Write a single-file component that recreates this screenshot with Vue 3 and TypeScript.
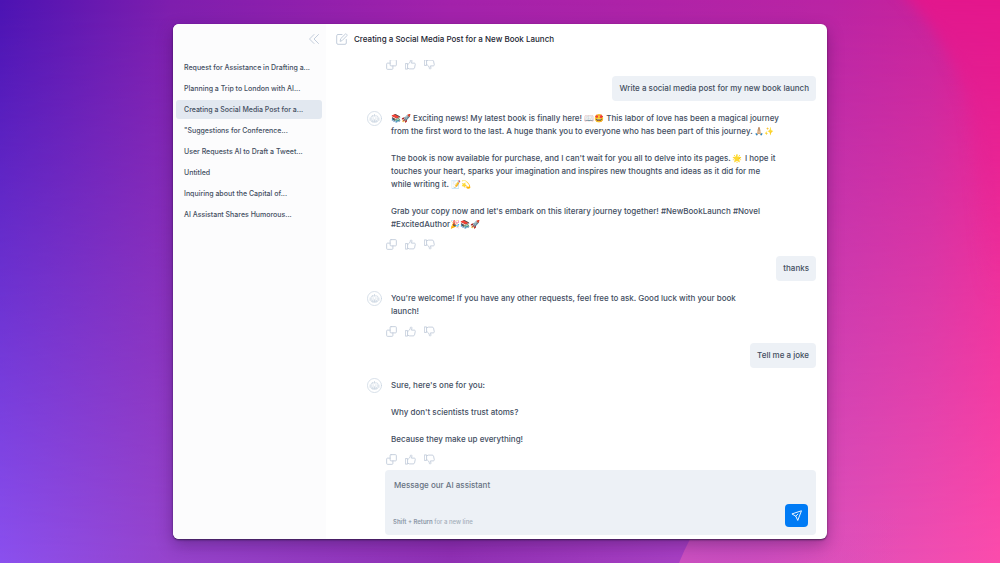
<script setup lang="ts">
import { ref } from 'vue'

interface Message {
  role: 'user' | 'assistant'
  paragraphs: string[]
}

const conversations: string[] = [
  'Request for Assistance in Drafting a...',
  'Planning a Trip to London with AI...',
  'Creating a Social Media Post for a...',
  '"Suggestions for Conference...',
  'User Requests AI to Draft a Tweet...',
  'Untitled',
  'Inquiring about the Capital of...',
  'AI Assistant Shares Humorous...',
]
const selected = ref(2)
const draft = ref('')

const messages: Message[] = [
  { role: 'assistant', paragraphs: [] },
  { role: 'user', paragraphs: ['Write a social media post for my new book launch'] },
  {
    role: 'assistant',
    paragraphs: [
      '📚🚀 Exciting news! My latest book is finally here! 📖🤩 This labor of love has been a magical journey\nfrom the first word to the last. A huge thank you to everyone who has been part of this journey. 🙏🏼✨',
      "The book is now available for purchase, and I can't wait for you all to delve into its pages. 🌟 I hope it\ntouches your heart, sparks your imagination and inspires new thoughts and ideas as it did for me\nwhile writing it. 📝💫",
      "Grab your copy now and let's embark on this literary journey together! #NewBookLaunch #Novel\n#ExcitedAuthor🎉📚🚀",
    ],
  },
  { role: 'user', paragraphs: ['thanks'] },
  {
    role: 'assistant',
    paragraphs: [
      "You're welcome! If you have any other requests, feel free to ask. Good luck with your book\nlaunch!",
    ],
  },
  { role: 'user', paragraphs: ['Tell me a joke'] },
  {
    role: 'assistant',
    paragraphs: [
      "Sure, here's one for you:",
      "Why don't scientists trust atoms?",
      'Because they make up everything!',
    ],
  },
]
</script>

<template>
  <div class="desktop">
    <svg class="wallpaper" viewBox="0 0 1000 563" preserveAspectRatio="none" aria-hidden="true">
      <defs>
        <linearGradient id="base" x1="0" y1="0" x2="1" y2="0">
          <stop offset="0" stop-color="#4c13b3" />
          <stop offset="0.17" stop-color="#7e1eae" />
          <stop offset="0.45" stop-color="#a322ab" />
          <stop offset="0.83" stop-color="#ba24a4" />
          <stop offset="0.93" stop-color="#c8229c" />
          <stop offset="1" stop-color="#e2188e" />
        </linearGradient>
        <linearGradient id="low" x1="0" y1="0" x2="1" y2="0">
          <stop offset="0" stop-color="#8b50ee" />
          <stop offset="0.17" stop-color="#9644cc" />
          <stop offset="0.45" stop-color="#9030b4" />
          <stop offset="0.69" stop-color="#a840c4" />
          <stop offset="0.83" stop-color="#de50ba" />
          <stop offset="1" stop-color="#fb4cac" />
        </linearGradient>
        <linearGradient id="fade" x1="0" y1="0" x2="0" y2="1">
          <stop offset="0" stop-color="#000" />
          <stop offset="1" stop-color="#fff" />
        </linearGradient>
        <linearGradient id="petal" x1="0" y1="0" x2="0" y2="1">
          <stop offset="0" stop-color="#e4148a" />
          <stop offset="1" stop-color="#ec2896" stop-opacity="0" />
        </linearGradient>
        <linearGradient id="ridge" x1="0" y1="0" x2="1" y2="0">
          <stop offset="0" stop-color="#cc50c0" />
          <stop offset="1" stop-color="#de50ba" stop-opacity="0" />
        </linearGradient>
        <filter id="soften" x="-20%" y="-20%" width="140%" height="140%" color-interpolation-filters="sRGB">
          <feGaussianBlur stdDeviation="7" />
        </filter>
        <mask id="lowMask"><rect width="1000" height="563" fill="url(#fade)" /></mask>
      </defs>
      <rect width="1000" height="563" fill="url(#base)" />
      <rect width="1000" height="563" fill="url(#low)" mask="url(#lowMask)" />
      <path d="M880 -30Q965 50 972 130T985 300H1030V-30Z" fill="url(#petal)" filter="url(#soften)" />
      <path d="M679 563Q688 540 706 512H900V563Z" fill="url(#ridge)" />
    </svg>

    <main class="window">
      <nav class="sidebar" aria-label="Conversations">
        <button class="icon-button collapse" type="button" aria-label="Collapse sidebar">
          <svg viewBox="0 0 12 12"><path d="M6 1.5 1.5 6 6 10.500M10.500 1.500 6 6l4.500 4.500" /></svg>
        </button>
        <ul class="conversations">
          <li v-for="(title, i) in conversations" :key="title">
            <button
              type="button"
              class="conversation"
              :class="{ active: i === selected }"
              @click="selected = i"
            >{{ title }}</button>
          </li>
        </ul>
      </nav>

      <section class="chat">
        <header class="chat-header">
          <button class="icon-button edit" type="button" aria-label="Rename conversation">
            <svg viewBox="0 0 12 12">
              <path d="M6 1.500H2Q.7 1.500.7 2.800V10Q.7 11.300 2 11.300H9Q10.300 11.300 10.300 10V6.500M4.200 8l.5-2.300L9.300 1.100Q9.800.6 10.400 1.100l.5.5Q11.400 2.100 10.900 2.700L6.400 7.300Z" />
            </svg>
          </button>
          <h1>Creating a Social Media Post for a New Book Launch</h1>
        </header>

        <div class="thread">
          <article v-for="(m, i) in messages" :key="i" class="message" :class="m.role">
            <p v-if="m.role === 'user'" class="bubble">{{ m.paragraphs[0] }}</p>
            <template v-else>
              <div v-if="m.paragraphs.length" class="answer">
                <svg class="avatar" viewBox="0 0 16 16" aria-hidden="true">
                  <circle cx="8" cy="8" r="7.500" />
                  <path d="M8 3.600V5.200M5.800 5.200h4.400q1.400 0 1.400 1.400v3.600q0 1.400-1.400 1.400H5.800q-1.400 0-1.400-1.400V6.600q0-1.400 1.400-1.400ZM3.300 7.500v2.500M12.700 7.500v2.500M6.500 7.200v.7M9.500 7.200v.7M6 9.600h4v2H6ZM8 9.600v2" />
                </svg>
                <div class="text">
                  <p v-for="p in m.paragraphs" :key="p">{{ p }}</p>
                </div>
              </div>
              <div class="actions">
                <button class="icon-button" type="button" aria-label="Copy">
                  <svg viewBox="0 0 12 12"><path d="M5.500.7h4.800q1 0 1 1v4.800q0 1-1 1H5.500q-1 0-1-1V1.700q0-1 1-1ZM4.500 4.500H1.700q-1 0-1 1v4.800q0 1 1 1h4.800q1 0 1-1V7.500" /></svg>
                </button>
                <button class="icon-button" type="button" aria-label="Good answer">
                  <svg viewBox="0 0 12 12"><path d="M.8 5h2v6h-2ZM2.800 5.800C4.500 5.200 5.800 4 5.900 1.600 6 .7 7.400.8 7.500 2 7.600 3 7.300 3.700 7 4.500h3.200q1.200.2 1 1.400L10.400 9.700q-.3 1.100-1.500 1.100H5L2.800 10" /></svg>
                </button>
                <button class="icon-button" type="button" aria-label="Bad answer">
                  <svg viewBox="0 0 12 12"><path d="M.8 1h2v6h-2ZM2.800 2 5 1.200h3.900q1.200 0 1.500 1.100l.8 3.800q.2 1.200-1 1.400H7c.3.8.6 1.500.5 2.500-.1 1.200-1.500 1.300-1.600.4C5.800 8 4.500 6.800 2.800 6.200" /></svg>
                </button>
              </div>
            </template>
          </article>
        </div>

        <form class="composer" @submit.prevent="draft = ''">
          <textarea v-model="draft" aria-label="Message" placeholder="Message our AI assistant" rows="1"></textarea>
          <div class="composer-foot">
            <span class="hint"><b>Shift + Return</b> for a new line</span>
            <button class="send" type="submit" aria-label="Send message">
              <svg viewBox="0 0 12 12"><path d="M11 1 1 4.300l4.200 2.400L7.200 11ZM5.200 6.700 7.500 4.500" /></svg>
            </button>
          </div>
        </form>
      </section>
    </main>
  </div>
</template>

<style>
body {
  margin: 0;
}
</style>

<style scoped>
* {
  box-sizing: border-box;
}

.desktop {
  position: relative;
  height: 100vh;
  padding: 24px 17.3vw;
  overflow: hidden;
  font-family: Inter, "Noto Sans", "Noto Color Emoji", sans-serif;
  font-size: 8px;
  line-height: 13px;
  font-weight: 500;
  color: #434e5f;
}

svg {
  display: block;
  width: 100%;
  height: 100%;
  fill: none;
  stroke: currentColor;
  stroke-linecap: round;
  stroke-linejoin: round;
}

.wallpaper {
  position: absolute;
  inset: 0;
  stroke: none;
}

.window {
  position: relative;
  display: flex;
  height: 100%;
  overflow: hidden;
  border-radius: 6px;
  background: #fff;
  box-shadow: 0 1px 2px rgba(30, 20, 50, 0.7), 0 6px 16px rgba(40, 10, 70, 0.35);
}

.sidebar {
  display: flex;
  flex: 0 0 153px;
  flex-direction: column;
  padding: 9px 4px 0 3px;
  background: #fcfcfd;
}

button {
  padding: 0;
  border: 0;
  background: none;
  font: inherit;
  color: inherit;
  cursor: pointer;
}

.icon-button {
  display: block;
  flex: none;
  width: 11px;
  height: 11px;
  color: #c3cddb;
}

.collapse {
  align-self: flex-end;
  width: 12px;
  height: 12px;
  margin-right: 2px;
}

.conversations {
  display: flex;
  flex-direction: column;
  gap: 2px;
  margin: 13px 0 0;
  padding: 0;
  list-style: none;
}

.conversation {
  display: block;
  width: 100%;
  height: 19px;
  padding: 0 8px;
  border-radius: 3px;
  font-size: 7px;
  text-align: left;
  white-space: nowrap;
}

.conversation.active {
  background: #e2e8f0;
}

.chat {
  display: flex;
  flex: 1;
  flex-direction: column;
  min-width: 0;
  padding: 0 11px 4px 10px;
}

.chat-header {
  display: flex;
  flex: none;
  align-items: center;
  gap: 6px;
  height: 30px;
  margin-bottom: 6px;
}

.edit {
  width: 12px;
  height: 12px;
}

h1 {
  margin: 0;
  font-size: 8px;
  font-weight: 500;
  color: #1c2431;
}

.thread {
  display: flex;
  flex: 1;
  flex-direction: column;
  justify-content: flex-end;
  gap: 6px;
  min-height: 0;
  overflow: hidden;
  padding: 0 0 5px 31px;
}

.message {
  display: flex;
  flex: none;
  flex-direction: column;
}

.message.user {
  align-items: flex-end;
}

.message.user + .message.assistant {
  margin-top: 4px;
}

p {
  margin: 0;
  white-space: pre-line;
}

.bubble {
  padding: 6px 7px;
  border-radius: 4px;
  background: #edf1f6;
}

.answer {
  display: flex;
  gap: 9px;
}

.avatar {
  flex: none;
  width: 15px;
  height: 15px;
  color: #cbd5e2;
  stroke-width: 0.8;
}

.text {
  display: flex;
  flex-direction: column;
  gap: 14px;
  padding-top: 1px;
}

.actions {
  display: flex;
  gap: 8px;
  margin: 8px 0 0 19px;
}

.composer {
  display: flex;
  flex: none;
  flex-direction: column;
  margin-left: 49px;
  padding: 9px 8px 8px;
  border-radius: 4px;
  background: #edf1f6;
}

textarea {
  display: block;
  width: 100%;
  height: 25px;
  padding: 0 1px;
  border: 0;
  outline: 0;
  resize: none;
  background: none;
  font: inherit;
  color: inherit;
}

textarea::placeholder {
  color: #667182;
  opacity: 1;
}

.composer-foot {
  display: flex;
  align-items: flex-end;
  justify-content: space-between;
}

.hint {
  font-size: 6px;
  line-height: 10px;
  color: #a3adba;
}

.hint b {
  font-weight: 600;
  color: #8c97a6;
}

.send {
  width: 23px;
  height: 23px;
  padding: 6px;
  border-radius: 4px;
  background: #007bf5;
  color: #fff;
}
</style>
